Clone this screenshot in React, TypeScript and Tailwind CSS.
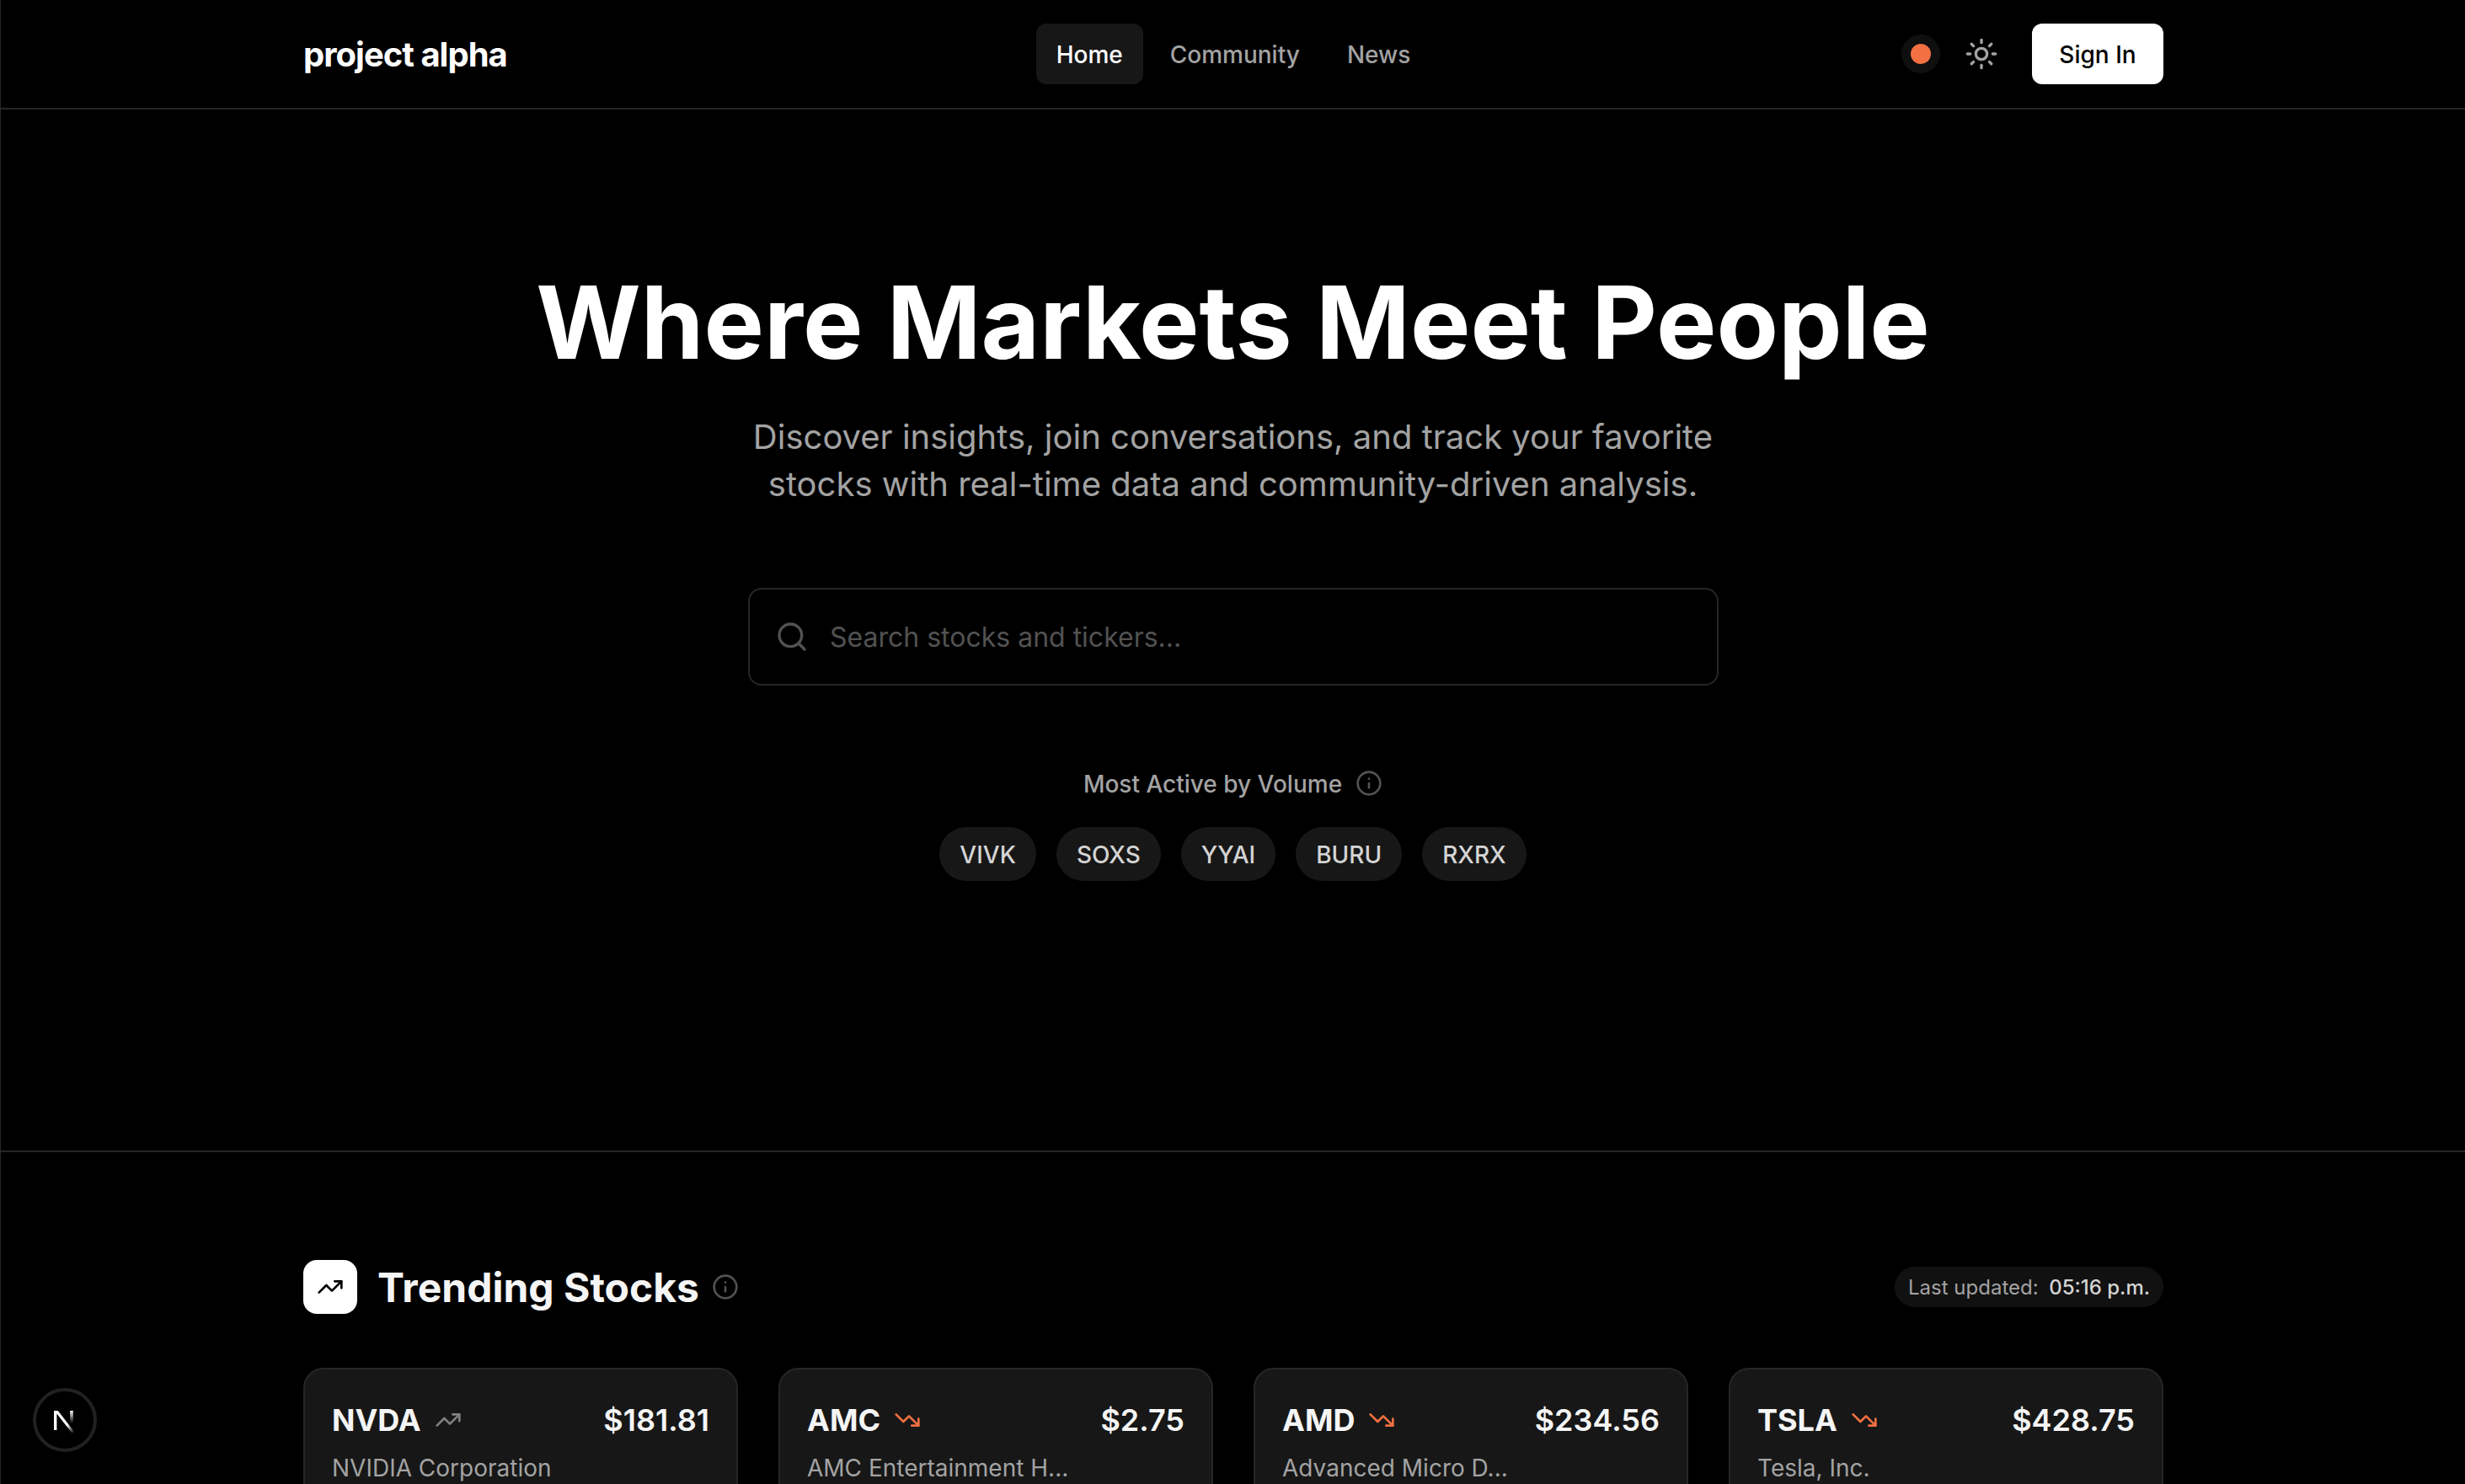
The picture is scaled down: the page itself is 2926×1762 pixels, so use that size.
import React from "react";
import { Info, Search, Sun, TrendingDown, TrendingUp } from "lucide-react";

const stocks = [
  { ticker: "NVDA", name: "NVIDIA Corporation", price: "$181.81", up: true },
  { ticker: "AMC", name: "AMC Entertainment H...", price: "$2.75", up: false },
  { ticker: "AMD", name: "Advanced Micro D...", price: "$234.56", up: false },
  { ticker: "TSLA", name: "Tesla, Inc.", price: "$428.75", up: false },
];

const active = ["VIVK", "SOXS", "YYAI", "BURU", "RXRX"];

function Header() {
  return (
    <header className="h-[130px] border-b-2 border-[#262626]">
      <div className="ml-[359px] grid h-32 w-[2208px] grid-cols-[1fr_auto_1fr] items-center">
        <div className="pt-0.5 text-[40px] leading-[56px] font-bold tracking-[-1px] text-white">project alpha</div>
        <nav className="flex items-center gap-2 text-[28px] leading-10 font-medium text-[#a3a3a3]">
          <a className="flex h-[72px] items-center rounded-xl bg-[#171717] px-6 pt-0.5 text-white">Home</a>
          <a className="flex h-[72px] items-center px-6 pt-0.5">Community</a>
          <a className="flex h-[72px] items-center px-6 pt-0.5">News</a>
        </nav>
        <div className="flex items-center justify-end">
          <span className="flex size-[46px] items-center justify-center rounded-full bg-[#0f0f0f]">
            <span className="size-6 rounded-full bg-[#f27042]" />
          </span>
          <Sun className="mr-10 ml-[29px] size-10 text-[#a3a3a3]" />
          <button className="h-[72px] w-[156px] rounded-xl bg-white pt-0.5 text-[28px] leading-10 font-medium text-black">Sign In</button>
        </div>
      </div>
    </header>
  );
}

function Hero() {
  return (
    <section className="flex h-[1238px] flex-col items-center border-b-2 border-[#262626] pt-[193px]">
      <h1 className="text-[120px] leading-[120px] font-bold whitespace-nowrap text-white">Where Markets Meet People</h1>
      <p className="mt-[48px] text-center text-[40px] leading-[56px] text-[#a3a3a3]">
        Discover insights, join conversations, and track your favorite
        <br />
        stocks with real-time data and community-driven analysis.
      </p>
      <div className="mt-[95px] ml-px flex h-[116px] w-[1152px] items-center rounded-2xl border-2 border-[#262626] px-[30px]">
        <Search className="size-10 text-[#525252]" />
        <span className="ml-[25px] pt-0.5 text-[32px] leading-[48px] text-[#525252]">Search stocks and tickers...</span>
      </div>
      <div className="mt-24 flex h-10 items-center gap-4">
        <span className="pt-0.5 text-[28px] leading-10 font-medium text-[#a3a3a3]">Most Active by Volume</span>
        <Info className="size-8 text-[#525252]" />
      </div>
      <div className="mt-8 flex gap-6">
        {active.map((t) => (
          <span key={t} className="rounded-full bg-[#171717] px-6 pt-[13px] pb-[11px] text-[28px] leading-10 font-medium text-[#d4d4d4]">
            {t}
          </span>
        ))}
      </div>
    </section>
  );
}

function Trending() {
  return (
    <section className="ml-[359px] w-[2208px] pt-32">
      <div className="flex h-16 items-center justify-between">
        <div className="flex items-center">
          <span className="flex size-16 items-center justify-center rounded-2xl bg-white">
            <TrendingUp className="size-8 text-black" />
          </span>
          <h2 className="ml-6 pt-0.5 text-[48px] leading-[64px] font-bold text-[#f5f5f5]">Trending Stocks</h2>
          <Info className="ml-[15px] size-8 text-[#525252]" />
        </div>
        <div className="flex h-12 w-[319px] items-center justify-between rounded-full bg-[#111111] px-4 pt-0.5 text-[24px] leading-8 text-[#a3a3a3]">
          Last updated:
          <span className="font-medium text-[#d4d4d4]">05:16 p.m.</span>
        </div>
      </div>
      <div className="mt-16 grid grid-cols-4 gap-12">
        {stocks.map((s) => (
          <article key={s.ticker} className="h-[300px] rounded-3xl border-2 border-[#262626] bg-[#171717] p-8">
            <div className="flex h-14 items-center text-[36px] leading-[56px] text-[#f5f5f5]">
              <span className="font-bold">{s.ticker}</span>
              {s.up ? (
                <TrendingUp className="ml-4 size-8 text-[#808080]" />
              ) : (
                <TrendingDown className="ml-4 size-8 text-[#f27042]" />
              )}
              <span className="ml-auto font-semibold">{s.price}</span>
            </div>
            <div className="mt-[9px] text-[28px] leading-10 text-[#a3a3a3]">{s.name}</div>
          </article>
        ))}
      </div>
    </section>
  );
}

function DevBadge() {
  return (
    <div className="absolute top-[1648px] left-[38px] flex size-[76px] items-center justify-center rounded-full border-4 border-[#212121] bg-black">
      <svg width="26" height="28" viewBox="0 0 26 28" fill="none" className="mt-1 mr-0.5">
        <defs>
          <linearGradient id="stem" x1="22" y1="1" x2="22" y2="16" gradientUnits="userSpaceOnUse">
            <stop stopColor="#fff" />
            <stop offset="1" stopColor="#fff" stopOpacity="0" />
          </linearGradient>
          <linearGradient id="slash" x1="16" y1="18" x2="24" y2="28" gradientUnits="userSpaceOnUse">
            <stop stopColor="#fff" />
            <stop offset="1" stopColor="#fff" stopOpacity="0" />
          </linearGradient>
        </defs>
        <path d="M20.2 1h3.6v15h-3.6z" fill="url(#stem)" />
        <path d="M1 1h4.8l19.6 25.2-2.5 2L4.4 4.6V24H1z" fill="url(#slash)" />
      </svg>
    </div>
  );
}

export default function App() {
  return (
    <div className="relative h-[1762px] w-[2926px] overflow-hidden border-l border-[#262626] bg-black font-['Inter',sans-serif]">
      <Header />
      <Hero />
      <Trending />
      <DevBadge />
    </div>
  );
}
